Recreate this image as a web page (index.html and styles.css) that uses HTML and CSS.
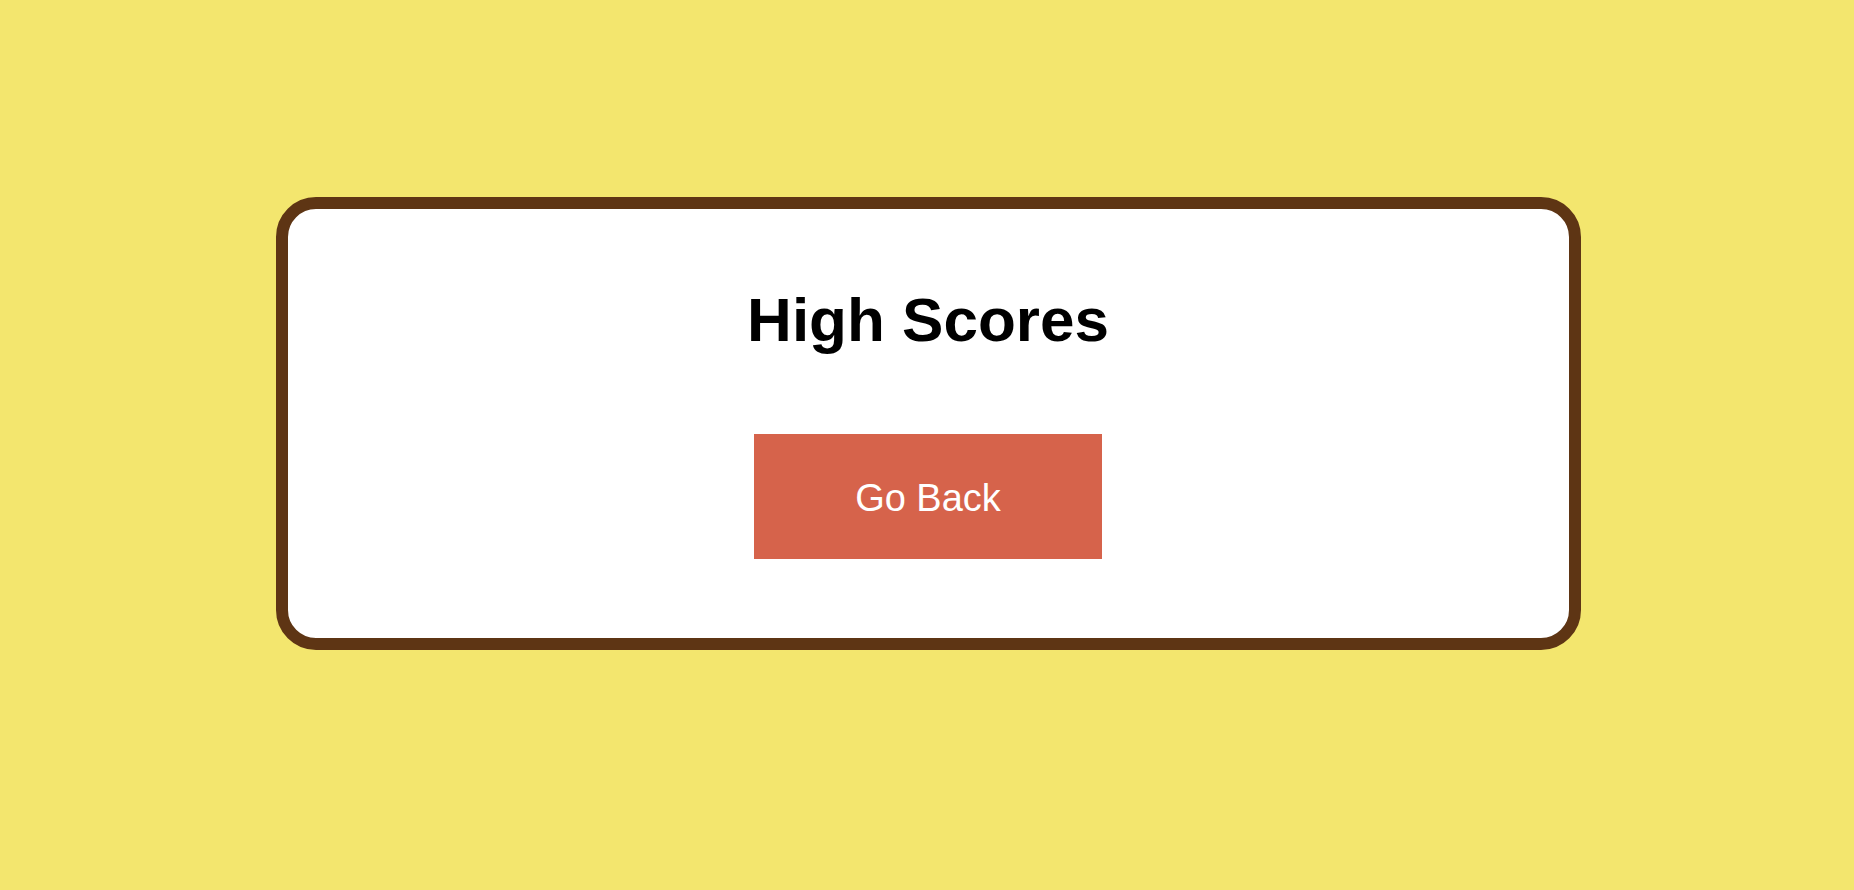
FILE: index.html
```html
<!DOCTYPE html>
<html lang="en">
<head>
<meta charset="utf-8">
<title>High Scores</title>
<link rel="stylesheet" href="styles.css">
</head>
<body>
<main class="card">
  <h1 class="title">High Scores</h1>
  <button class="back-btn" type="button">Go Back</button>
</main>
</body>
</html>
```

FILE: styles.css
```css
html, body {
  margin: 0;
  padding: 0;
}
body {
  background: #f3e66e;
  font-family: "Liberation Sans", Arial, sans-serif;
  height: 890px;
  overflow: hidden;
}
.card {
  box-sizing: border-box;
  width: 1305px;
  height: 453px;
  margin: 197px auto 0;
  position: relative;
  left: 1px;
  background: #ffffff;
  border: 12px solid #5e3514;
  border-radius: 40px;
  display: flex;
  flex-direction: column;
  align-items: center;
  padding-top: 76px;
}
.title {
  margin: 0;
  font-size: 62px;
  font-weight: 700;
  line-height: 69px;
  color: #000;
}
.back-btn {
  margin-top: 80px;
  width: 348px;
  height: 125px;
  background: #d6634b;
  border: none;
  color: #fff;
  font-family: "Liberation Sans", Arial, sans-serif;
  font-size: 38px;
  padding: 3px 0 0;
}
```
